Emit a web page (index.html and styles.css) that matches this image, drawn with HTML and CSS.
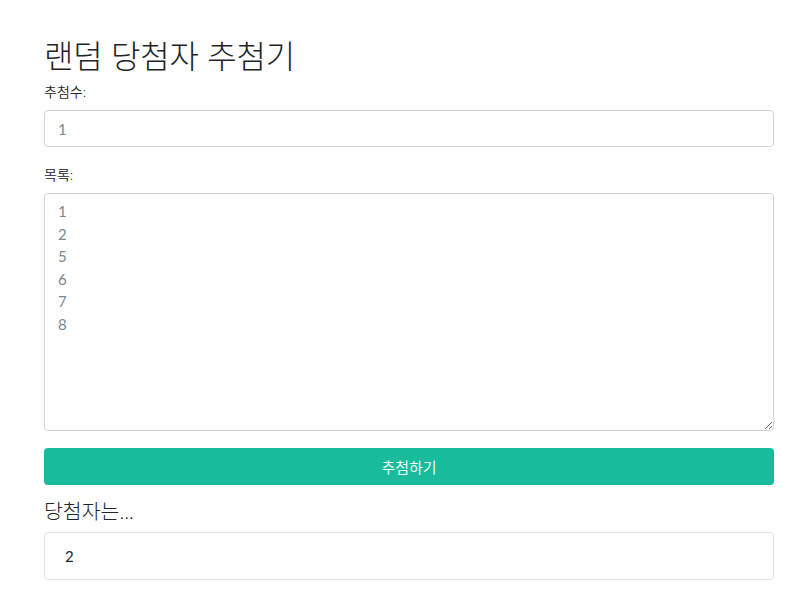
FILE: index.html
```html
<!DOCTYPE html>
<html lang="ko">
<head>
<meta charset="utf-8">
<title>랜덤 당첨자 추첨기</title>
<link rel="stylesheet" href="styles.css">
</head>
<body>
<div class="container">
  <h1 class="title">랜덤 당첨자 추첨기</h1>
  <div class="group">
    <label class="label">추첨수:</label>
    <input class="field" type="text" placeholder="1">
  </div>
  <div class="group">
    <label class="label">목록:</label>
    <textarea class="field area" placeholder="1&#10;2&#10;5&#10;6&#10;7&#10;8"></textarea>
  </div>
  <button class="btn">추첨하기</button>
  <h4 class="subtitle">당첨자는...</h4>
  <div class="well">2</div>
</div>
</body>
</html>
```
FILE: styles.css
```css
html, body {
  margin: 0;
  padding: 0;
  background: #fff;
}
body {
  font-family: Lato, "Noto Sans CJK KR", sans-serif;
  font-size: 15px;
  color: #212529;
}
.container {
  margin-left: 44px;
  width: 730px;
  padding-top: 37px;
}
.title {
  margin: 0 0 6px;
  font-size: 32px;
  font-weight: 300;
  line-height: 1.2;
  letter-spacing: -0.2px;
  color: #212529;
}
.group {
  margin-bottom: 17px;
}
.label {
  display: block;
  font-size: 14px;
  font-weight: 350;
  line-height: 1.5;
  margin-bottom: 8px;
}
.field {
  display: block;
  box-sizing: border-box;
  width: 100%;
  height: 37px;
  padding: 6px 13px;
  font-family: Lato, "Noto Sans CJK KR", sans-serif;
  font-size: 15px;
  line-height: 1.5;
  border: 1px solid #ced4da;
  border-radius: 4px;
  color: #495057;
  outline: none;
}
.field::placeholder {
  color: #7b8a8b;
}
.area {
  height: 238px;
  padding-top: 6px;
  resize: vertical;
}
.btn {
  display: block;
  width: 100%;
  height: 37px;
  border: none;
  border-radius: 4px;
  background: #18bc9c;
  color: #fff;
  font-family: Lato, "Noto Sans CJK KR", sans-serif;
  font-size: 15px;
  font-weight: 350;
}
.subtitle {
  margin: 14px 0 8px;
  font-size: 20.5px;
  font-weight: 300;
  line-height: 1.2;
}
.well {
  box-sizing: border-box;
  height: 48px;
  padding: 12px 20px;
  border: 1px solid #e3e3e3;
  border-radius: 4px;
  font-size: 15px;
  line-height: 1.5;
}
```
